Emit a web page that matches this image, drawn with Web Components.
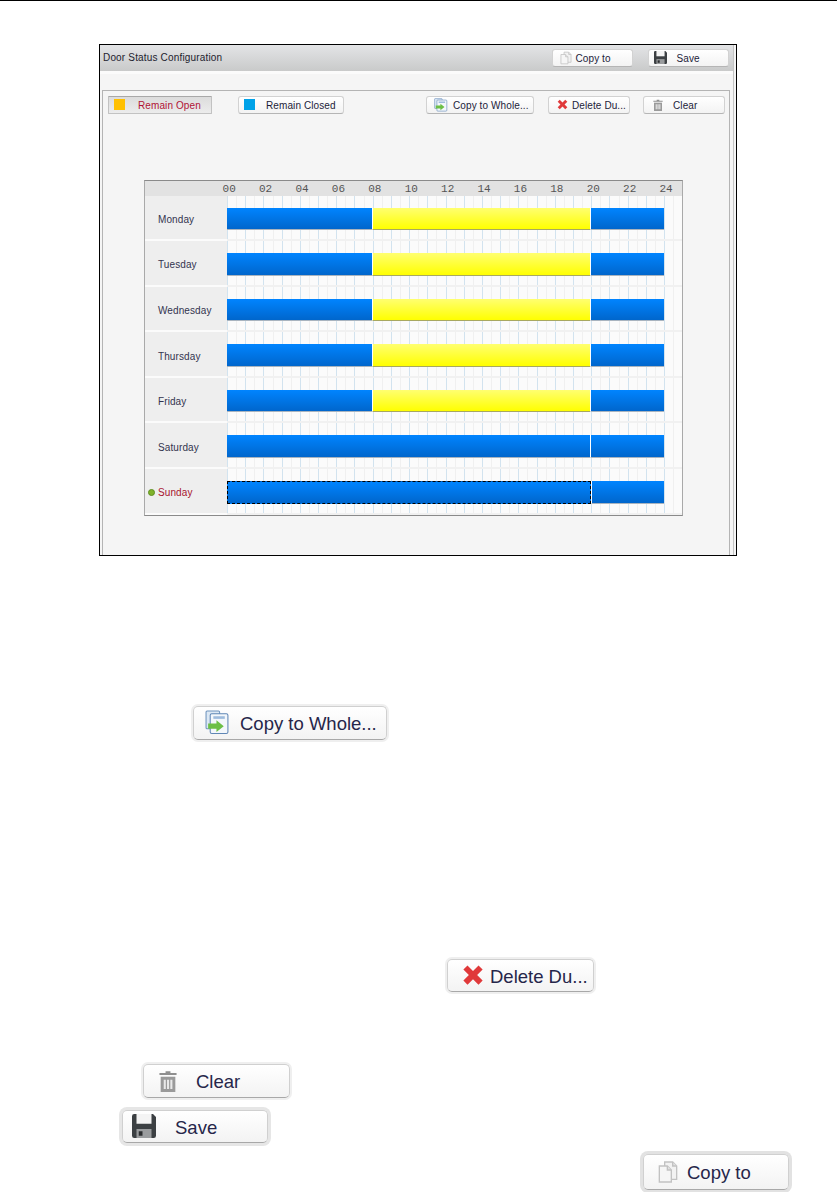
<!DOCTYPE html>
<html>
<head>
<meta charset="utf-8">
<title>Door Status Configuration</title>
<style>
  html, body { margin: 0; background: #fff; }
  body { font-family: "Liberation Sans", Arial, sans-serif; height: 1192px; overflow: hidden; }
</style>
</head>
<body>
<manual-page>
  <config-window>
    <tool-btn slot="head" icon="copy" style="--w:81px;--pl:6px;--gap:3px;--ico:14px">Copy to</tool-btn>
    <tool-btn slot="head" icon="save" style="--w:81px;--pl:5px;--gap:10px;--ico:13px;margin-left:15px">Save</tool-btn>

    <tool-btn slot="tools" icon="open" active style="--w:104px;--pl:5px;--gap:13px;--ico:11px">Remain Open</tool-btn>
    <tool-btn slot="tools" icon="closed" style="--w:106px;--pl:5px;--gap:11px;--ico:11px;margin-left:26px">Remain Closed</tool-btn>
    <tool-btn slot="tools" icon="whole" style="--w:108px;--pl:7px;--gap:5px;--ico:14px;margin-left:82px">Copy to Whole...</tool-btn>
    <tool-btn slot="tools" icon="del" style="--w:82px;--pl:8px;--gap:4px;--ico:11px;margin-left:14px">Delete Du...</tool-btn>
    <tool-btn slot="tools" icon="trash" style="--w:82px;--pl:8px;--gap:9px;--ico:12px;margin-left:13px">Clear</tool-btn>

    <week-grid slot="grid">
      <day-row spans="c8 o12 c4">Monday</day-row>
      <day-row spans="c8 o12 c4">Tuesday</day-row>
      <day-row spans="c8 o12 c4">Wednesday</day-row>
      <day-row spans="c8 o12 c4">Thursday</day-row>
      <day-row spans="c8 o12 c4">Friday</day-row>
      <day-row spans="c20 c4">Saturday</day-row>
      <day-row spans="s20 c4" current>Sunday</day-row>
    </week-grid>
  </config-window>

  <tool-btn large icon="whole" style="--w:194px;--h:34px;--pl:11px;--gap:10px;--ico:25px;margin:150px 0 0 193px">Copy to Whole...</tool-btn>
  <tool-btn large icon="del" style="--w:147px;--h:33px;--pl:14px;--gap:6px;--ico:22px;margin:219px 0 0 447px">Delete Du...</tool-btn>
  <tool-btn large icon="trash" style="--w:147px;--h:34px;--pl:13px;--gap:17px;--ico:22px;margin:72px 0 0 143px">Clear</tool-btn>
  <tool-btn large icon="save" style="--w:146px;--h:33px;--pl:9px;--gap:19px;--ico:24px;--halo:3px;--halo-c:#e6e6e6;margin:12px 0 0 122px">Save</tool-btn>
  <tool-btn large icon="copy" style="--w:146px;--h:36px;--pl:12px;--gap:7px;--ico:24px;--halo:3px;--halo-c:#e2e2e2;margin:11px 0 0 643px">Copy to</tool-btn>
</manual-page>

<script>
  var ICONS = {
    copy: '<svg viewBox="0 0 16 18"><path d="M5.500 1.500h6l3 3v10h-9z" fill="#f2f2f2" stroke="#c2c2c2"/><path d="M1.500 4.500h6l3 3v9h-9z" fill="#f6f6f6" stroke="#c2c2c2"/><path d="M7.500 4.500v3h3" fill="#e2e2e2" stroke="#c2c2c2"/><path d="M11.500 1.500v3h3" fill="#e2e2e2" stroke="#c2c2c2"/></svg>',
    save: '<svg viewBox="0 0 16 16"><path d="M0 1.500A1.500 1.500 0 0 1 1.500 0H14l2 2v12.500A1.500 1.500 0 0 1 14.500 16h-13A1.500 1.500 0 0 1 0 14.500z" fill="#3c4043"/><rect x="3" y="0" width="10" height="6.500" fill="#f4f4f4"/><rect x="3" y="10" width="10" height="6" fill="#9a9c9e"/><rect x="4.500" y="11.500" width="2.500" height="3" fill="#2c2e30"/></svg>',
    open: '<svg viewBox="0 0 11 11"><rect width="11" height="11" fill="#ffc000"/></svg>',
    closed: '<svg viewBox="0 0 11 11"><rect width="11" height="11" fill="#00a2e8"/></svg>',
    whole: '<svg viewBox="0 0 24 24"><rect x="1" y="1" width="13" height="17" rx="1" fill="#dce8f4" stroke="#6f93bd"/><rect x="5" y="3.500" width="17" height="19" rx="1.500" fill="#f3f7fb" stroke="#5f86b5"/><rect x="8" y="6" width="11" height="2.500" fill="#9dbbdc"/><path d="M3 13h8V9.800l7 5.700-7 5.700V18H3z" fill="#6cbf46"/></svg>',
    del: '<svg viewBox="0 0 16 16"><path d="M1 4l3-3 4 4 4-4 3 3-4 4 4 4-3 3-4-4-4 4-3-3 4-4z" fill="#e0393a"/></svg>',
    trash: '<svg viewBox="0 0 16 18"><path d="M6 1h4v1.500h5V4H1V2.500h5z" fill="#8f8f8f"/><path d="M2 5.500h12V18H2z" fill="#9a9a9a"/><path d="M4.500 8h1.700v7.500H4.500zM7.200 8h1.700v7.500H7.200zM9.900 8h1.700v7.500H9.900z" fill="#e9e9e9"/></svg>'
  };

  class ToolBtn extends HTMLElement {
    connectedCallback() {
      var root = this.shadowRoot || this.attachShadow({mode: 'open'});
      root.innerHTML = `
        <style>
          :host {
            display: flex; align-items: center; box-sizing: border-box;
            width: var(--w); height: var(--h, 18px); flex: none;
            padding-left: var(--pl); gap: var(--gap);
            background: linear-gradient(#ffffff, #f3f3f3);
            border: 1px solid #d2d2d2; border-bottom-color: #b5b5b5; border-radius: 3px;
            font: 10px "Liberation Sans", Arial, sans-serif; letter-spacing: .1px;
            color: #1c1c3a; white-space: nowrap;
          }
          :host([large]) {
            font-size: 18.500px; letter-spacing: 0; border-radius: 5px;
            border-color: #d0d0d0; border-bottom-color: #a8a8a8;
            box-shadow: 0 0 0 var(--halo, 2px) var(--halo-c, #efefef);
            color: #26264a;
          }
          :host([active]) {
            background: linear-gradient(#dcdcdc, #ececec);
            border-color: #c2c2c2; border-top-color: #a8a8a8; border-radius: 1px;
            color: #b01235;
          }
          span { padding-top: 1px; }
          :host([large]) span { padding-top: 3px; }
          svg { width: var(--ico); height: var(--ico); display: block; flex: none; }
        </style>
        ${ICONS[this.getAttribute('icon')] || ''}<span><slot></slot></span>`;
    }
  }
  customElements.define('tool-btn', ToolBtn);

  class DayRow extends HTMLElement {
    connectedCallback() {
      var root = this.shadowRoot || this.attachShadow({mode: 'open'});
      var bars = this.getAttribute('spans').split(' ').map(function (s) {
        var kind = s.charAt(0), hrs = s.slice(1);
        return '<i class="' + kind + '" style="flex:' + hrs + ' 0 0"></i>';
      }).join('');
      root.innerHTML = `
        <style>
          :host { display: grid; grid-template-columns: 82px 1fr; height: 45.600px; }
          .name {
            display: flex; align-items: center; padding: 4px 0 0 13.500px; position: relative;
            background: #eeeeee; border-bottom: 2px solid #fbfbfb; box-sizing: border-box;
            font: 10px "Liberation Sans", Arial, sans-serif; letter-spacing: .1px; color: #33344e;
          }
          :host([current]) .name { color: #a8152f; }
          :host([current]) .name::before {
            content: ""; position: absolute; left: 3.500px; top: 20px; width: 5px; height: 5px;
            border-radius: 50%; background: #7fb22a; border: .5px solid #5f8f20;
          }
          .track {
            display: flex; align-items: flex-start; padding: 12px 18px 0 0; box-sizing: border-box;
            background-color: #fbfbfb;
            background-image:
              linear-gradient(#f1f1f1, #f1f1f1),
              repeating-linear-gradient(90deg, #d2e3ef 0 1px, transparent 1px 18.210px),
              repeating-linear-gradient(90deg, #f0f0f0 0 1px, transparent 1px 9.105px);
            background-size: 100% 2px, 438px 100%, 100% 100%;
            background-position: 0 100%, 0 0, 0 0;
            background-repeat: no-repeat;
          }
          i { display: block; height: 22.500px; box-sizing: border-box; }
          i + i { border-left: 1.500px solid #fff; }
          .c, .s { background: linear-gradient(#0084ff, #0066cc); border-bottom: 1px solid #a9b4bf; }
          .o { background: linear-gradient(#ffff70, #ffff00); border-bottom: 1px solid #a8a860; }
          .s { border: 1px dashed #000; outline: 0; }
        </style>
        <div class="name"><slot></slot></div>
        <div class="track">${bars}</div>`;
    }
  }
  customElements.define('day-row', DayRow);

  class WeekGrid extends HTMLElement {
    connectedCallback() {
      var root = this.shadowRoot || this.attachShadow({mode: 'open'});
      var hours = '';
      for (var h = 0; h <= 24; h += 2) {
        hours += '<span>' + (h < 10 ? '0' + h : h) + '</span>';
      }
      root.innerHTML = `
        <style>
          :host {
            display: block; box-sizing: border-box; width: 539.500px; margin-left: 40.500px;
            border: 1px solid #a9a9a9; border-top-color: #8a8a8a; border-bottom-color: #8a8a8a;
          }
          .hours {
            display: flex; height: 15px; padding-left: 66.500px; background: #e2e2e2;
            font: 11px/16px "Liberation Mono", "Courier New", monospace; color: #555;
          }
          .hours span { flex: none; width: 36.420px; text-align: center; }
        </style>
        <div class="hours">${hours}</div>
        <slot></slot>`;
    }
  }
  customElements.define('week-grid', WeekGrid);

  class ConfigWindow extends HTMLElement {
    connectedCallback() {
      var root = this.shadowRoot || this.attachShadow({mode: 'open'});
      root.innerHTML = `
        <style>
          :host {
            display: block; box-sizing: border-box; width: 638px; height: 512px;
            margin-left: 99px; border: 1.500px solid #000; background: #f5f5f5;
          }
          .wrap { height: 100%; margin-right: 2.500px; border-right: 1px solid #c4c4c4; box-sizing: border-box; }
          header {
            display: flex; align-items: center; justify-content: space-between; height: 26px;
            padding: 0 4px 0 3px; border-bottom: 3px solid #fbfbfb;
            background: linear-gradient(#e3e4e6, #c9caca);
            font: 10px "Liberation Sans", Arial, sans-serif; letter-spacing: .17px; color: #22222e;
          }
          .acts { display: flex; }
          .panel {
            box-sizing: border-box; height: 465px; margin: 16px 3px 0 2px;
            border: 1px solid #b4b4b4; border-bottom: 0;
          }
          .tools { display: flex; padding: 5px 0 0 5px; }
          .grid { padding-top: 66px; }
        </style>
        <div class="wrap">
          <header>
            <span>Door Status Configuration</span>
            <div class="acts"><slot name="head"></slot></div>
          </header>
          <div class="panel">
            <div class="tools"><slot name="tools"></slot></div>
            <div class="grid"><slot name="grid"></slot></div>
          </div>
        </div>`;
    }
  }
  customElements.define('config-window', ConfigWindow);

  class ManualPage extends HTMLElement {
    connectedCallback() {
      var root = this.shadowRoot || this.attachShadow({mode: 'open'});
      root.innerHTML = `
        <style>
          :host { display: block; border-top: 1.500px solid #000; padding-top: 42.500px; }
        </style>
        <slot></slot>`;
    }
  }
  customElements.define('manual-page', ManualPage);
</script>
</body>
</html>
